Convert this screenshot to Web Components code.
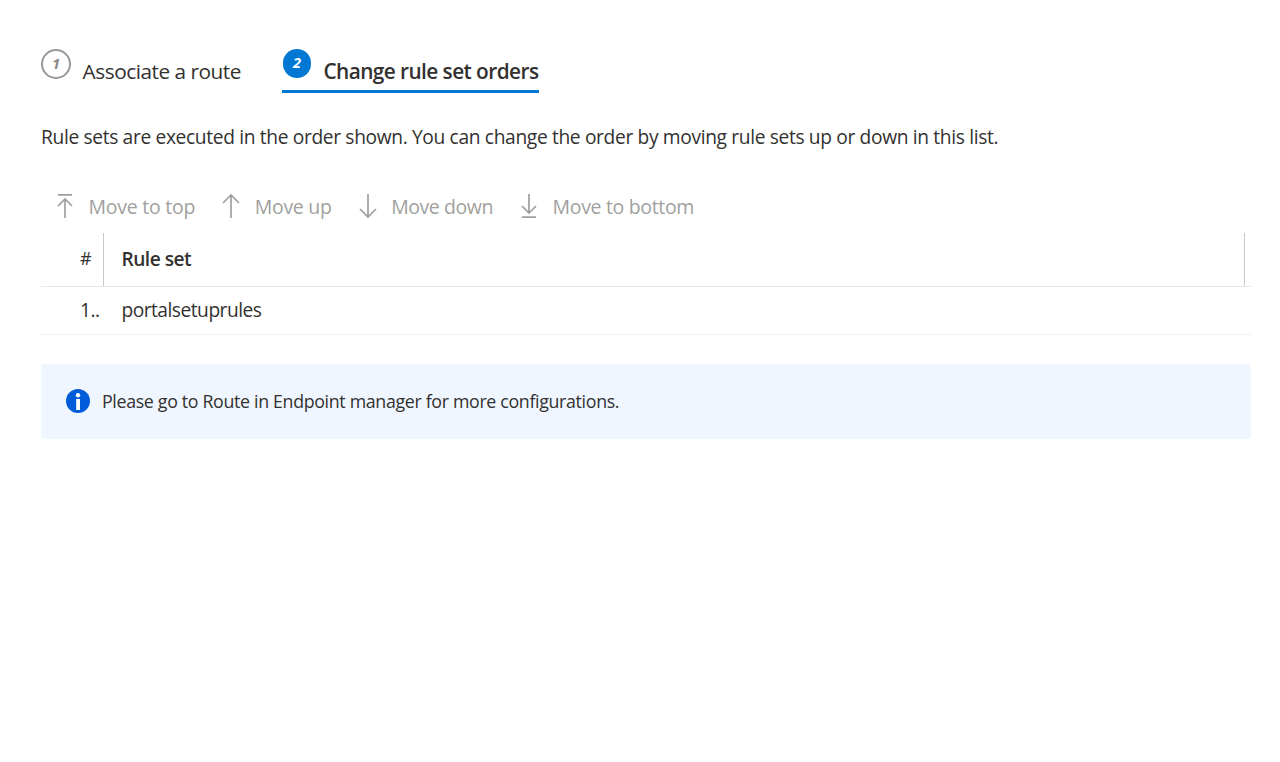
<!DOCTYPE html>
<html lang="en"><head><meta charset="utf-8"><title>Rule sets</title>
<style>
body{margin:0;background:#fff;color:#323130;font-family:"Open Sans","Noto Sans",sans-serif}
</style></head><body>
<rule-page></rule-page>
<script>
const define=(name,html,setup)=>{
  const t=document.createElement('template');t.innerHTML=html;
  customElements.define(name,class extends HTMLElement{
    constructor(){super();this.attachShadow({mode:'open'}).append(t.content.cloneNode(true));}
    connectedCallback(){if(setup)setup(this,this.shadowRoot);}
  });
};
define('wizard-step',`<style>
:host{display:flex;box-sizing:border-box;width:201px;height:45px;border-bottom:3px solid transparent;font-size:20.8px;line-height:30px;white-space:nowrap;letter-spacing:-.48px}
:host([active]){width:257px;border-color:#0078d4;font-weight:600;letter-spacing:-.56px}
.n{box-sizing:border-box;width:30px;height:30px;margin:.6px 11.6px 0 0;border:2px solid #999;border-radius:50%;color:#8a8886;font:italic 700 14.5px/26px "Open Sans",sans-serif;letter-spacing:0;text-align:center;flex:none}
:host([active]) .n{width:28.6px;height:28.6px;line-height:28px;margin:1px 12.1px 0 .7px;background:#0078d4;border:0;color:#fff}
.t{padding-top:8px}
</style><span class="n"><slot name="number"></slot></span><span class="t"><slot></slot></span>`);
define('move-command',`<style>
:host{display:flex;align-items:center;color:#a19f9d;font-size:19.5px;line-height:28px;white-space:nowrap}
svg{width:24px;height:26px;margin:-2px 11.6px 0 0;fill:none;stroke:currentColor;stroke-width:1.7;flex:none}
span{letter-spacing:var(--track,0)}
</style><svg viewBox="0 0 24 26"><path/></svg><span><slot></slot></span>`,(e,r)=>{
  const d={top:'M5 1.8H19M12 25V6M5 13l7-7 7 7',up:'M12 25V2M4 10l8-8 8 8',down:'M12 1V24M4 16l8 8 8-8',bottom:'M5 24.2H19M12 1V20M5 13l7 7 7-7'};
  r.querySelector('path').setAttribute('d',d[e.getAttribute('icon')]);
});
define('rule-table',`<style>
:host{display:block;font-size:19.2px;letter-spacing:-.5px}
.row{display:grid;grid-template-columns:63px 1fr 6px;box-sizing:border-box;border-bottom:1px solid #f0f0f0}
.head{height:54px;line-height:52px;font-weight:600;border-color:#e8e8e8}
.body{height:48px;line-height:45px}
.a{padding-left:39px;white-space:nowrap}.b{padding-left:17.4px}
.head .a,.head .b{border-right:1px solid #c8c8c8}
.head .a{font-size:18px;line-height:51px;font-weight:500}
</style><div class="row head"><div class="a">#</div><div class="b"><slot name="heading"></slot></div></div>
<div class="row body"><div class="a">1..</div><div class="b"><slot></slot></div></div>`);
define('info-banner',`<style>
:host{display:flex;align-items:center;box-sizing:border-box;height:75px;padding:0 0 1px 25px;background:#eff6ff;border-radius:4px;font-size:17.8px;letter-spacing:-.33px}
svg{width:24px;height:24px;margin-right:12px}
</style><svg viewBox="0 0 24 24"><circle cx="12" cy="12" r="12" fill="#015cda"/><circle cx="12" cy="6.2" r="2.2" fill="#fff"/><path d="M10.2 10h3.8v11h-3.8z" fill="#fff"/></svg><span><slot></slot></span>`);
define('rule-page',`<style>
:host{display:block;padding:48px 29px 0 41px}
.steps{display:flex;gap:40px}
p{margin:30px 0 0;font-size:19.2px;line-height:28px;letter-spacing:-.35px;white-space:nowrap}
.bar{display:flex;margin:42px 0 12px 12px;height:28px;gap:24px}
info-banner{margin-top:29px}
</style>
<div class="steps"><wizard-step><span slot="number">1</span>Associate a route</wizard-step><wizard-step active><span slot="number">2</span>Change rule set orders</wizard-step></div>
<p>Rule sets are executed in the order shown. You can change the order by moving rule sets up or down in this list.</p>
<div class="bar"><move-command icon="top" style="--track:-.26px">Move to top</move-command><move-command icon="up" style="--track:-.3px">Move up</move-command><move-command icon="down" style="--track:-.44px">Move down</move-command><move-command icon="bottom" style="--track:-.33px">Move to bottom</move-command></div>
<rule-table><span slot="heading">Rule set</span>portalsetuprules</rule-table>
<info-banner>Please go to Route in Endpoint manager for more configurations.</info-banner>`);
</script></body></html>
